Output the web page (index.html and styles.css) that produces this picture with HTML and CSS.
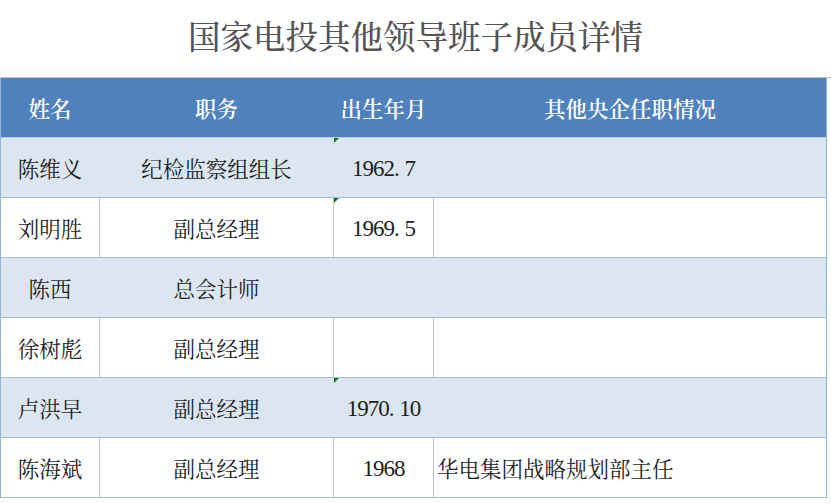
FILE: index.html
```html
<!DOCTYPE html>
<html lang="zh-CN">
<head>
<meta charset="utf-8">
<title>国家电投其他领导班子成员详情</title>
<link rel="stylesheet" href="styles.css">
</head>
<body>
<div class="title">国家电投其他领导班子成员详情</div>
<div class="sheet">
  <div class="row head">
    <div class="cell">姓名</div>
    <div class="cell">职务</div>
    <div class="cell">出生年月</div>
    <div class="cell">其他央企任职情况</div>
  </div>
  <div class="row stripe">
    <div class="cell">陈维义</div>
    <div class="cell">纪检监察组组长</div>
    <div class="cell num flag">1962<span class="dot">.</span>7</div>
    <div class="cell left"></div>
  </div>
  <div class="row plain">
    <div class="cell">刘明胜</div>
    <div class="cell">副总经理</div>
    <div class="cell num flag">1969<span class="dot">.</span>5</div>
    <div class="cell left"></div>
  </div>
  <div class="row stripe">
    <div class="cell">陈西</div>
    <div class="cell">总会计师</div>
    <div class="cell num"></div>
    <div class="cell left"></div>
  </div>
  <div class="row plain">
    <div class="cell">徐树彪</div>
    <div class="cell">副总经理</div>
    <div class="cell num"></div>
    <div class="cell left"></div>
  </div>
  <div class="row stripe">
    <div class="cell">卢洪早</div>
    <div class="cell">副总经理</div>
    <div class="cell num flag">1970<span class="dot">.</span>10</div>
    <div class="cell left"></div>
  </div>
  <div class="row plain">
    <div class="cell">陈海斌</div>
    <div class="cell">副总经理</div>
    <div class="cell num">1968</div>
    <div class="cell left">华电集团战略规划部主任</div>
  </div>
</div>
</body>
</html>
```
FILE: styles.css
```css
html, body {
  margin: 0;
  padding: 0;
  background: #ffffff;
}

body {
  font-family: "Liberation Serif", "Noto Serif CJK SC", "Noto Sans CJK SC", serif;
  color: #1e1e1e;
  width: 831px;
}

.title {
  box-sizing: border-box;
  height: 78px;
  padding-top: 14px;
  text-align: center;
  font-size: 32.5px;
  line-height: 48px;
  font-weight: 500;
  color: #555555;
  border-bottom: 1px solid #c4c4c4;
}

.sheet {
  width: 827px;
  box-sizing: border-box;
  border-left: 1px solid #95b3d7;
  border-right: 1px solid #8db4e2;
}

.row {
  display: grid;
  grid-template-columns: 99px 234px 100px 1fr;
  height: 60px;
  box-sizing: border-box;
  border-bottom: 1px solid #a3bddd;
}

.row.head {
  background: #4f81bd;
  color: #ffffff;
  font-weight: 600;
  border-bottom: 1px solid #b8cce4;
}

.row.stripe {
  background: #dce6f1;
}

.row.plain {
  background: #ffffff;
}

.cell {
  position: relative;
  display: flex;
  align-items: center;
  justify-content: center;
  font-size: 21.5px;
  box-sizing: border-box;
  border-right: 1px solid transparent;
  white-space: nowrap;
}

.row.plain .cell {
  border-right-color: #c3c3c3;
}

.row .cell:last-child {
  border-right: none;
}

.cell.left {
  justify-content: flex-start;
  padding-left: 3px;
}

.row.head .cell:last-child {
  justify-content: center;
}

.cell.num {
  font-size: 23px;
  letter-spacing: -1px;
  padding-top: 3px;
}

.dot {
  margin-right: 0.25em;
}

.cell.flag::before {
  content: "";
  position: absolute;
  left: 0;
  top: 0;
  width: 0;
  height: 0;
  border-top: 5px solid #0a7a12;
  border-right: 5px solid transparent;
}
```
